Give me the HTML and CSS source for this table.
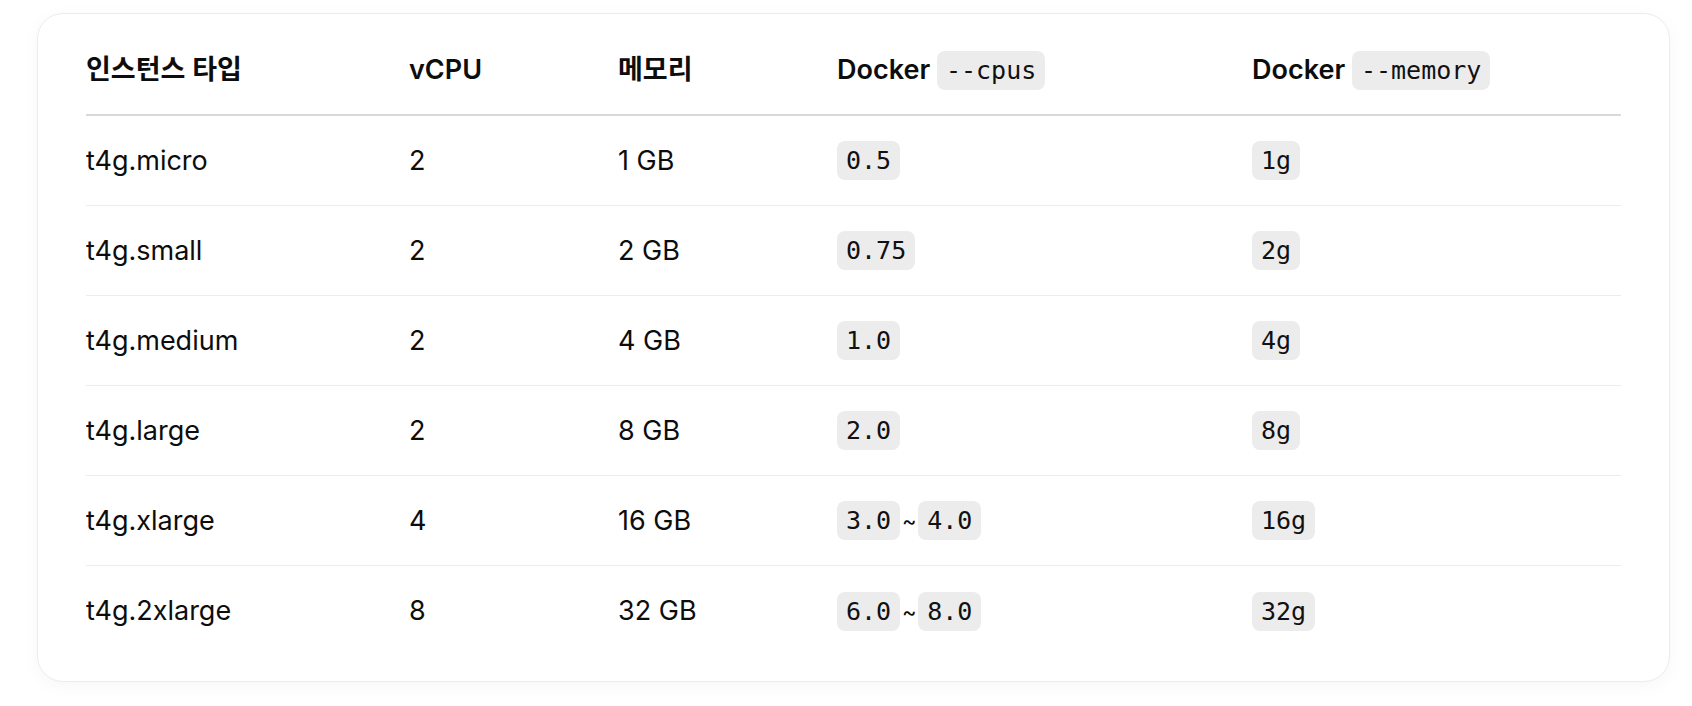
FILE: index.html
```html
<!DOCTYPE html>
<html lang="ko">
<head>
<meta charset="utf-8">
<title>Instance types</title>
<link rel="stylesheet" href="styles.css">
</head>
<body>
<div class="card">
  <div class="table">
    <div class="row head">
      <div class="cell">인스턴스 타입</div>
      <div class="cell">vCPU</div>
      <div class="cell">메모리</div>
      <div class="cell">Docker <code>--cpus</code></div>
      <div class="cell">Docker <code>--memory</code></div>
    </div>
    <div class="row">
      <div class="cell">t4g.micro</div>
      <div class="cell">2</div>
      <div class="cell">1 GB</div>
      <div class="cell"><code>0.5</code></div>
      <div class="cell"><code>1g</code></div>
    </div>
    <div class="row">
      <div class="cell">t4g.small</div>
      <div class="cell">2</div>
      <div class="cell">2 GB</div>
      <div class="cell"><code>0.75</code></div>
      <div class="cell"><code>2g</code></div>
    </div>
    <div class="row">
      <div class="cell">t4g.medium</div>
      <div class="cell">2</div>
      <div class="cell">4 GB</div>
      <div class="cell"><code>1.0</code></div>
      <div class="cell"><code>4g</code></div>
    </div>
    <div class="row">
      <div class="cell">t4g.large</div>
      <div class="cell">2</div>
      <div class="cell">8 GB</div>
      <div class="cell"><code>2.0</code></div>
      <div class="cell"><code>8g</code></div>
    </div>
    <div class="row">
      <div class="cell">t4g.xlarge</div>
      <div class="cell">4</div>
      <div class="cell">16 GB</div>
      <div class="cell"><code>3.0</code><span class="tilde">~</span><code>4.0</code></div>
      <div class="cell"><code>16g</code></div>
    </div>
    <div class="row last">
      <div class="cell">t4g.2xlarge</div>
      <div class="cell">8</div>
      <div class="cell">32 GB</div>
      <div class="cell"><code>6.0</code><span class="tilde">~</span><code>8.0</code></div>
      <div class="cell"><code>32g</code></div>
    </div>
  </div>
</div>
</body>
</html>
```

FILE: styles.css
```css
html, body {
  margin: 0;
  padding: 0;
  background: #ffffff;
}

body {
  padding: 13px 22px 24px 37px;
  font-family: Inter, "Noto Sans CJK KR", sans-serif;
  font-size: 27px;
  color: #0d0d0d;
}

.card {
  box-sizing: border-box;
  width: 1633px;
  height: 669px;
  background: #fff;
  border: 1px solid #ececec;
  border-radius: 26px;
  box-shadow: 0 4px 18px rgba(0, 0, 0, 0.035);
  padding: 12px 48px 28px 48px;
}

.table {
  display: flex;
  flex-direction: column;
}

.row {
  display: grid;
  grid-template-columns: 323px 209px 219px 415px 1fr;
  align-items: center;
  height: 90px;
  border-bottom: 1px solid #ececec;
  box-sizing: border-box;
}

.row.head {
  height: 90px;
  border-bottom: 2px solid #d9d9d9;
  font-weight: 600;
}

.row.last {
  border-bottom: none;
}

.cell {
  line-height: 40px;
  white-space: nowrap;
}

.tilde {
  display: inline-block;
  width: 18px;
  text-align: center;
  font-size: 22px;
}

code {
  font-family: "DejaVu Sans Mono", monospace;
  font-size: 25px;
  font-weight: 400;
  background: #ececec;
  border-radius: 8px;
  padding: 5px 9px;
  color: #111;
}
```
